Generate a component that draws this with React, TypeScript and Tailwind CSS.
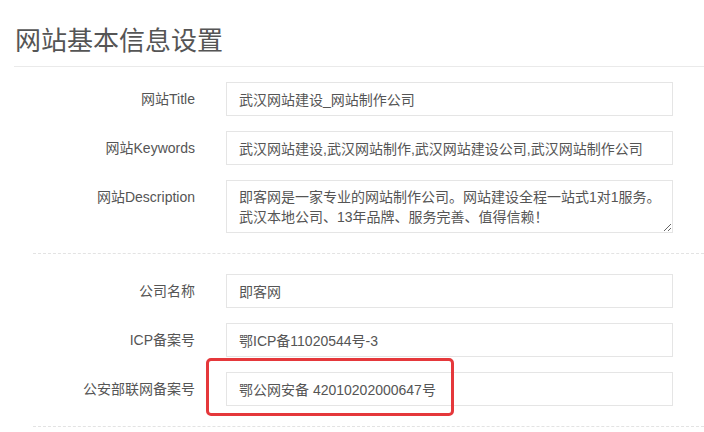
import React from "react";

const font = { fontFamily: '"Liberation Sans", "Noto Sans CJK SC", sans-serif' };

function Row({ label, value }: { label: string; value: string }) {
  return (
    <div className="flex items-center gap-[31px]">
      <label className="w-[181px] shrink-0 text-right text-[14px] leading-[20px] text-[#555]">
        {label}
      </label>
      <input
        readOnly
        value={value}
        className="h-[34px] w-[447px] border border-[#e5e5e5] bg-white px-[12px] text-[14px] text-[#555] outline-none"
      />
    </div>
  );
}

export default function App() {
  return (
    <div className="h-[432px] w-[704px] overflow-hidden bg-white pl-[14px]" style={font}>
      <h1 className="border-b border-[#eaeaea] pb-[7px] pl-px pt-[23px] text-[26px] font-normal leading-[36px] text-[#555]">
        网站基本信息设置
      </h1>

      <div className="mt-[15px] flex flex-col gap-[15px]">
        <Row label="网站Title" value="武汉网站建设_网站制作公司" />
        <Row
          label="网站Keywords"
          value="武汉网站建设,武汉网站制作,武汉网站建设公司,武汉网站制作公司"
        />
        <div className="flex items-start gap-[31px]">
          <label className="w-[181px] shrink-0 pt-[7px] text-right text-[14px] leading-[20px] text-[#555]">
            网站Description
          </label>
          <textarea
            readOnly
            wrap="off"
            defaultValue={"即客网是一家专业的网站制作公司。网站建设全程一站式1对1服务。\n武汉本地公司、13年品牌、服务完善、值得信赖！"}
            className="h-[53px] w-[447px] overflow-hidden whitespace-pre border border-[#e5e5e5] bg-white pl-[12px] pr-[4px] py-[6px] text-[14px] leading-[20px] text-[#555] outline-none"
          />
        </div>
      </div>

      <div className="my-[20px] ml-[19px] border-t border-dashed border-[#e3e3e3]" />

      <div className="flex flex-col gap-[15px]">
        <Row label="公司名称" value="即客网" />
        <Row label="ICP备案号" value="鄂ICP备11020544号-3" />
        <div className="relative">
          <Row label="公安部联网备案号" value="鄂公网安备 42010202000647号" />
          {/* highlight box */}
          <div className="pointer-events-none absolute left-[192px] top-[-14px] h-[58px] w-[248px] rounded-[5px] border-[3px] border-[#e5383b]" />
        </div>
      </div>

      <div className="ml-[19px] mt-[20px] border-t border-dashed border-[#e3e3e3]" />
    </div>
  );
}
